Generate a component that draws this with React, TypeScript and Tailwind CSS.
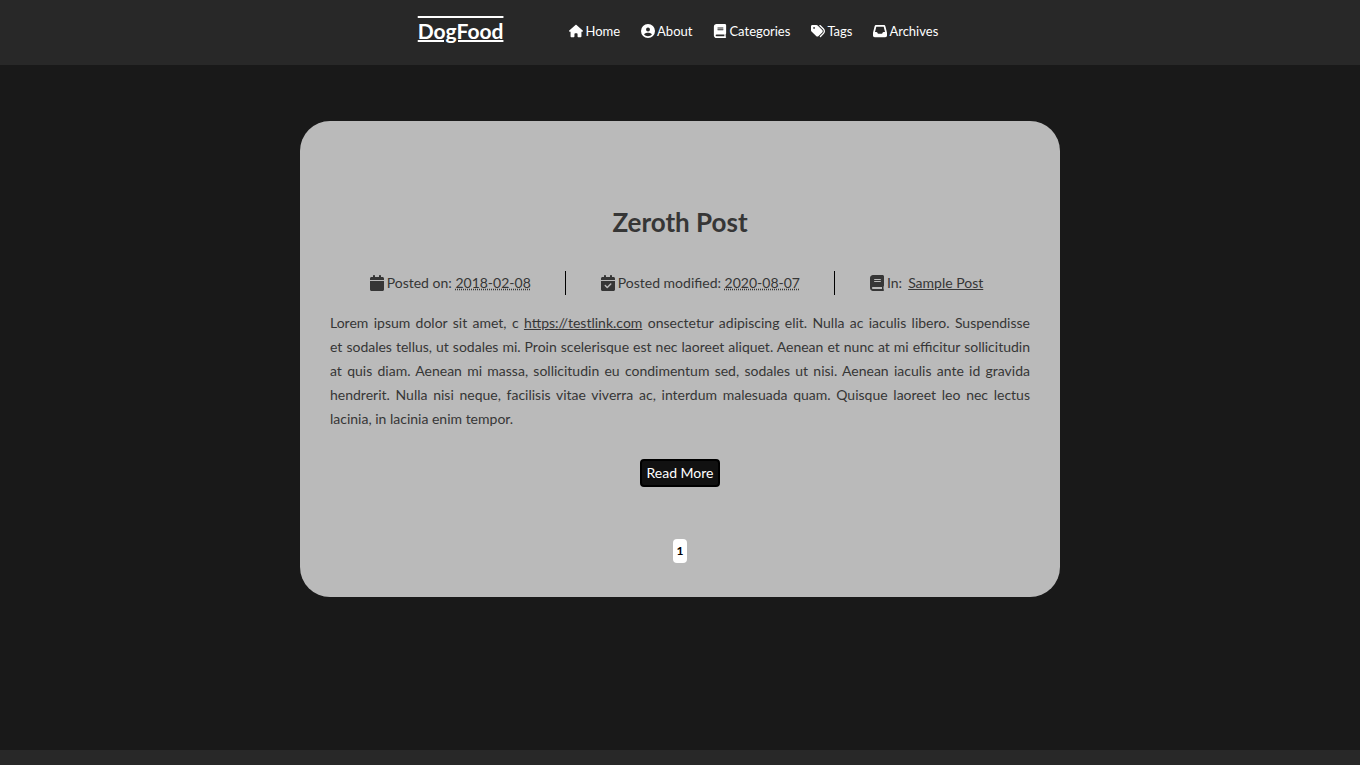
import type { ComponentType, ReactNode, SVGProps } from "react";
import {
  FaCalendar,
  FaCalendarCheck,
  FaCircleUser,
  FaHouse,
  FaInbox,
  FaTags,
} from "react-icons/fa6";

type IconType = ComponentType<SVGProps<SVGSVGElement>>;

function BookIcon(props: SVGProps<SVGSVGElement>) {
  return (
    <svg viewBox="0 0 448 512" width="1em" height="1em" fill="currentColor" {...props}>
      <path d="M448 336v-288C448 21.49 426.5 0 400 0H96C42.98 0 0 42.98 0 96v320c0 53.02 42.98 96 96 96h320c17.67 0 32-14.33 32-31.1c0-11.72-6.607-21.52-16-27.1v-81.36C441.8 362.8 448 350.1 448 336zM143.1 128h192C344.8 128 352 135.2 352 144C352 152.8 344.8 160 336 160H143.1C135.2 160 128 152.8 128 144C128 135.2 135.2 128 143.1 128zM143.1 192h192C344.8 192 352 199.2 352 208C352 216.8 344.8 224 336 224H143.1C135.2 224 128 216.8 128 208C128 199.2 135.2 192 143.1 192zM384 448H96c-17.67 0-32-14.33-32-32c0-17.67 14.33-32 32-32h288V448z" />
    </svg>
  );
}

const links: { label: string; icon: IconType }[] = [
  { label: "Home", icon: FaHouse },
  { label: "About", icon: FaCircleUser },
  { label: "Categories", icon: BookIcon },
  { label: "Tags", icon: FaTags },
  { label: "Archives", icon: FaInbox },
];

function Header() {
  return (
    <header className="flex h-[65px] items-center justify-center gap-[66px] bg-[#282828] pr-1 pb-[3px] text-white">
      <a
        href="#"
        className="text-[21px] leading-7 font-bold decoration-2 [text-decoration-line:underline_overline]"
      >
        DogFood
      </a>
      <nav className="flex items-center gap-[21px]">
        {links.map(({ label, icon: Icon }) => (
          <a key={label} href="#" className="flex items-center gap-0.5 text-[13px] leading-5">
            <Icon className="text-[14px]" aria-hidden="true" />
            {label}
          </a>
        ))}
      </nav>
    </header>
  );
}

function Meta({ icon: Icon, children }: { icon: IconType; children: ReactNode }) {
  return (
    <div className="flex items-center justify-center gap-0.5 px-[34px] whitespace-nowrap">
      <Icon className="text-base" aria-hidden="true" />
      {children}
    </div>
  );
}

function Post() {
  return (
    <article className="text-sm leading-6">
      <h1 className="text-center text-[26px] leading-10 font-bold">Zeroth Post</h1>
      <div className="mt-[29px] flex justify-center divide-x divide-black pr-2">
        <Meta icon={FaCalendar}>
          <span>
            Posted on:{" "}
            <time className="underline decoration-dotted">2018-02-08</time>
          </span>
        </Meta>
        <Meta icon={FaCalendarCheck}>
          <span>
            Posted modified:{" "}
            <time className="underline decoration-dotted">2020-08-07</time>
          </span>
        </Meta>
        <Meta icon={BookIcon}>
          <span>In:</span>
          <a href="#" className="ml-1 underline">
            Sample Post
          </a>
        </Meta>
      </div>
      <p className="mt-4 text-justify">
        Lorem ipsum dolor sit amet, c{" "}
        <a href="#" className="underline">
          https://testlink.com
        </a>{" "}
        onsectetur adipiscing elit. Nulla ac iaculis libero. Suspendisse et&nbsp;sodales tellus, ut
        sodales mi. Proin scelerisque est nec laoreet aliquet. Aenean et nunc at mi efficitur
        sollicitudin at&nbsp;quis diam. Aenean mi massa, sollicitudin eu condimentum sed, sodales ut
        nisi. Aenean iaculis ante id gravida hendrerit. Nulla nisi neque, facilisis vitae viverra
        ac, interdum malesuada quam. Quisque laoreet leo nec lectus lacinia, in lacinia enim
        tempor.
      </p>
      <div className="mt-7 flex justify-center">
        <a
          href="#"
          className="rounded-[4px] border-2 border-black bg-[#111111] px-1 text-white"
        >
          Read More
        </a>
      </div>
    </article>
  );
}

export default function App() {
  return (
    <div className="flex min-h-screen flex-col bg-[#191919] font-['Lato',sans-serif] text-[#363636]">
      <Header />
      <main className="flex-1 px-4 py-14">
        <div className="mx-auto max-w-[760px] rounded-[30px] bg-[#bababa] px-[30px] pt-[81px] pb-[34px]">
          <Post />
          <nav aria-label="Pagination" className="mt-[52px] flex justify-center">
            <a
              href="#"
              aria-current="page"
              className="w-3.5 rounded-[4px] bg-white text-center text-xs leading-6 font-bold text-black"
            >
              1
            </a>
          </nav>
        </div>
      </main>
      <footer className="h-[15px] bg-[#282828]" />
    </div>
  );
}
